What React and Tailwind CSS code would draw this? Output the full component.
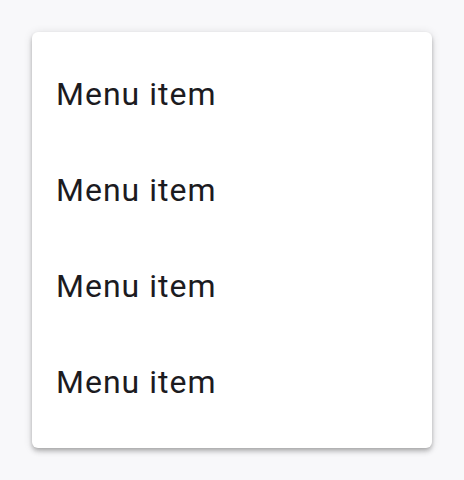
export default function App() {
  const items = ["Menu item", "Menu item", "Menu item", "Menu item"];
  return (
    <div className="w-[464px] h-[480px] bg-[#f8f8fa] p-8" style={{ fontFamily: "Roboto, sans-serif" }}>
      <div className="w-[400px] bg-white rounded-md py-4 shadow-[0_2px_4px_-1px_rgba(0,0,0,0.2),0_4px_5px_0_rgba(0,0,0,0.14),0_1px_10px_0_rgba(0,0,0,0.12)]">
        {items.map((t, i) => (
          <div key={i} className="h-24 flex items-center px-6 pb-1 text-[32px] leading-[48px] tracking-[1px] text-[#1c1b1f]">
            {t}
          </div>
        ))}
      </div>
    </div>
  );
}
